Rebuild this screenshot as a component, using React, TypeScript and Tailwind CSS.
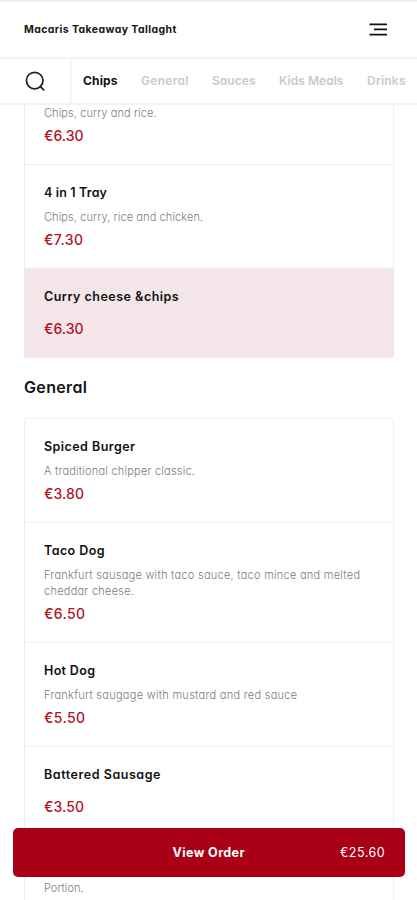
type Line = { text: string; tracking: string };
type Item = { id: string; name?: Line; desc?: Line[]; price?: Line; selected?: boolean };

const chips: Item[] = [
  {
    id: "c1",
    desc: [{ text: "Chips, curry and rice.", tracking: "tracking-[0.09px]" }],
    price: { text: "€6.30", tracking: "tracking-[0px]" },
  },
  {
    id: "c2",
    name: { text: "4 in 1 Tray", tracking: "tracking-[0.16px]" },
    desc: [{ text: "Chips, curry, rice and chicken.", tracking: "tracking-[0.1px]" }],
    price: { text: "€7.30", tracking: "tracking-[0.4px]" },
  },
  {
    id: "c3",
    name: { text: "Curry cheese &chips", tracking: "tracking-[0.49px]" },
    price: { text: "€6.30", tracking: "tracking-[0px]" },
    selected: true,
  },
];

const general: Item[] = [
  {
    id: "g1",
    name: { text: "Spiced Burger", tracking: "tracking-[0.45px]" },
    desc: [{ text: "A traditional chipper classic.", tracking: "tracking-[0.21px]" }],
    price: { text: "€3.80", tracking: "tracking-[0.1px]" },
  },
  {
    id: "g2",
    name: { text: "Taco Dog", tracking: "tracking-[0.42px]" },
    desc: [
      { text: "Frankfurt sausage with taco sauce, taco mince and melted", tracking: "tracking-[0.26px]" },
      { text: "cheddar cheese.", tracking: "tracking-[0.25px]" },
    ],
    price: { text: "€6.50", tracking: "tracking-[0.37px]" },
  },
  {
    id: "g3",
    name: { text: "Hot Dog", tracking: "tracking-[0.34px]" },
    desc: [{ text: "Frankfurt saugage with mustard and red sauce", tracking: "tracking-[0.28px]" }],
    price: { text: "€5.50", tracking: "tracking-[0.37px]" },
  },
  {
    id: "g4",
    name: { text: "Battered Sausage", tracking: "tracking-[0.55px]" },
    price: { text: "€3.50", tracking: "tracking-[0.1px]" },
  },
  {
    id: "g5",
    desc: [{ text: "Portion.", tracking: "tracking-[0.01px]" }],
  },
];

function MenuItem({ item }: { item: Item }) {
  return (
    <li
      className={`border-x border-b px-[19px] pt-4 pb-[17px] ${
        item.selected ? "border-[#f1e4e7] bg-[#f4e5e8]" : "border-[#eeeeee] bg-white"
      }`}
    >
      <h3 className={`h-6 text-[12.5px] leading-6 font-semibold text-[#101010] ${item.name?.tracking ?? ""}`}>
        {item.name?.text}
      </h3>
      {item.desc && (
        <p className="mt-1 text-[11px] leading-4 font-light text-[#7c7c7c]">
          {item.desc.map((line) => (
            <span key={line.text} className={`block ${line.tracking}`}>
              {line.text}
            </span>
          ))}
        </p>
      )}
      <p
        className={`h-[22px] text-[14px] leading-[22px] font-medium text-[#b3121f] ${item.price?.tracking ?? ""} ${
          item.desc ? "mt-1" : "mt-[9px]"
        }`}
      >
        {item.price?.text}
      </p>
    </li>
  );
}

function MenuList({ items }: { items: Item[] }) {
  return (
    <ul className="mr-[23px] ml-6 overflow-hidden rounded-[4px] bg-[#eeeeee] pt-px">
      {items.map((item, i) => (
        <div key={item.id} className={i === 0 ? "overflow-hidden rounded-t-[3px]" : ""}>
          <MenuItem item={item} />
        </div>
      ))}
    </ul>
  );
}

export default function App() {
  return (
    <div className="relative flex h-[900px] w-full flex-col overflow-hidden bg-white font-['Inter','Noto_Sans',sans-serif] whitespace-nowrap [font-feature-settings:'cv11']">
      <header className="flex h-[59px] shrink-0 items-center justify-between border-t-2 border-b-2 border-t-[#ececec] border-b-[#f4f4f4] pr-[30px] pl-6">
        <h1 className="text-[10.5px] font-bold tracking-[0.4px] text-[#151515]">Macaris Takeaway Tallaght</h1>
        <svg width="18" height="14" viewBox="0 0 18 14" stroke="#111" strokeWidth="1.7" aria-label="Menu">
          <path d="M0.5 1.3H18M5 6.4H18M0.5 11.6H18" />
        </svg>
      </header>

      <nav className="flex h-[46px] shrink-0 items-stretch border-b-2 border-[#f4f4f4] text-xs font-semibold text-[#c9c9c9]">
        <div className="flex w-[72px] shrink-0 items-center border-r-2 border-[#f5f5f5] pl-[25px]">
          <svg width="21" height="21" viewBox="0 0 21 21" fill="none" stroke="#1c1c1c" strokeWidth="1.7" aria-label="Search">
            <circle cx="9.7" cy="9.6" r="8.3" />
            <path d="M15.2 15.4L19.2 19.4" />
          </svg>
        </div>
        <div className="flex items-center pl-[11px]">
          <span className="w-[58px] font-bold tracking-[0.15px] text-[#111]">Chips</span>
          <span className="w-[71px] tracking-[0.31px]">General</span>
          <span className="w-[67px] tracking-[0.03px]">Sauces</span>
          <span className="w-[88px] tracking-[0.03px]">Kids Meals</span>
          <span className="tracking-[0.21px]">Drinks</span>
        </div>
      </nav>

      <main className="flex min-h-0 flex-1 flex-col overflow-hidden">
        <div className="-mt-[45px] shrink-0">
          <MenuList items={chips} />
          <h2 className="mt-[16px] mb-[18px] ml-6 h-[26px] text-base leading-[26px] font-semibold tracking-[0.35px] text-[#151515]">
            General
          </h2>
          <MenuList items={general} />
        </div>
      </main>

      <button className="absolute top-[828px] right-3 left-[12.5px] grid h-[49px] grid-cols-[1fr_auto_1fr] items-center rounded-[5px] bg-[#a90017] px-5 pt-px text-[12.5px] text-white">
        <span />
        <span className="font-bold tracking-[0.4px]">View Order</span>
        <span className="text-right font-normal tracking-[0.47px]">€25.60</span>
      </button>
    </div>
  );
}
